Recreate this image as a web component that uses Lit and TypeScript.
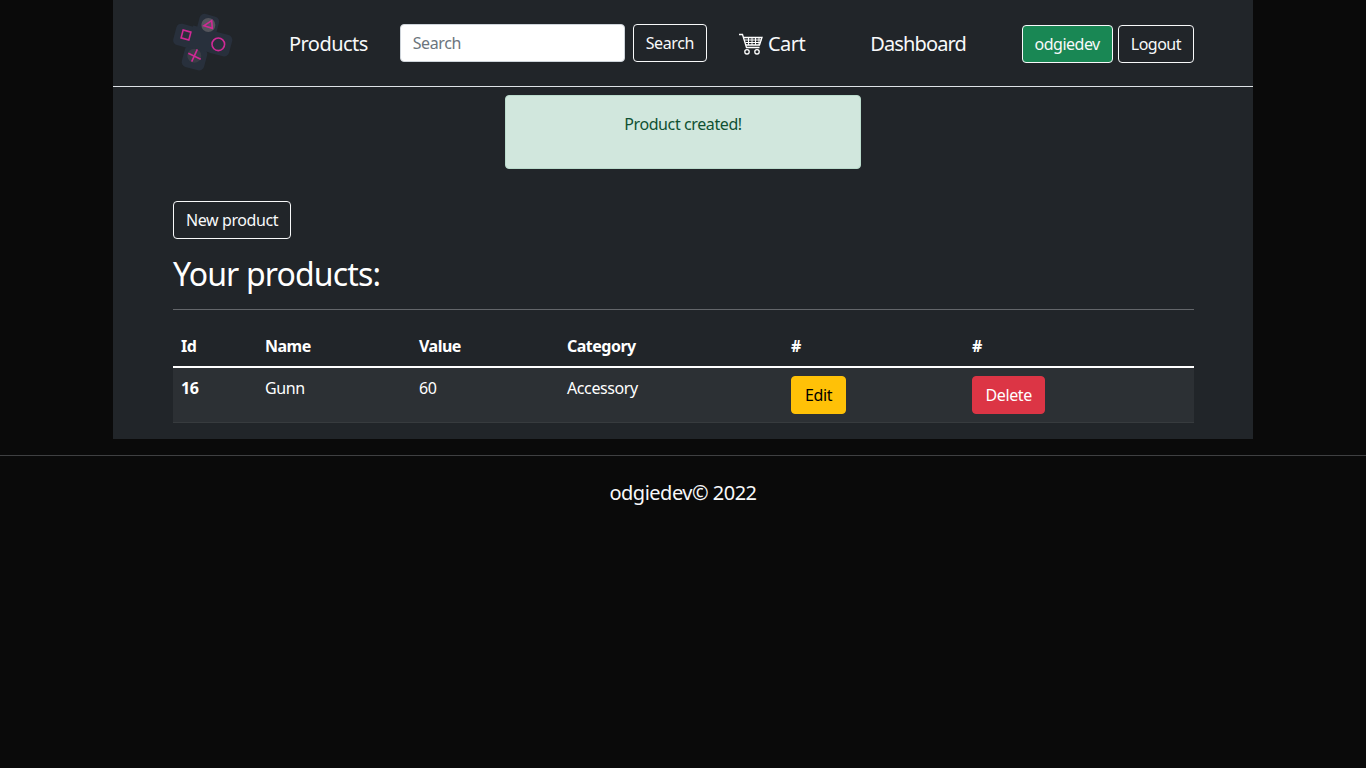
import { LitElement, html, css } from 'lit';
import { customElement } from 'lit/decorators.js';

@customElement('app-root')
export class AppRoot extends LitElement {
  static styles = css`
    :host {
      display: block;
      min-height: 768px;
      background: #0a0a0a;
      color: #fff;
      font-family: 'Noto Sans', sans-serif;
      font-size: 16px;
      line-height: 24px;
      letter-spacing: -0.4px;
    }
    .container {
      width: 1140px;
      margin: 0 auto;
      background: #212529;
      padding-bottom: 16px;
    }
    nav {
      height: 86px;
      border-bottom: 1px solid #dee2e6;
      display: flex;
      align-items: center;
      padding: 0 59px 0 60px;
    }
    .logo {
      width: 60px;
      height: 60px;
      margin-right: 56px;
      flex: none;
    }
    .nav-link {
      font-size: 20px;
      color: #f8f9fa;
      margin-top: 2px;
      letter-spacing: -0.55px;
    }
    .search {
      display: flex;
      gap: 8px;
      margin-left: 32px;
    }
    input {
      width: 225px;
      height: 38px;
      box-sizing: border-box;
      border: 1px solid #ced4da;
      border-radius: 4px;
      padding: 6px 12px;
      font: inherit;
      letter-spacing: inherit;
      background: #fff;
    }
    input::placeholder {
      color: #6c757d;
    }
    .btn {
      display: inline-block;
      box-sizing: border-box;
      height: 38px;
      padding: 6px 12px;
      border: 1px solid #f8f9fa;
      border-radius: 4px;
      background: transparent;
      color: #f8f9fa;
      font: inherit;
      letter-spacing: inherit;
    }
    .cart {
      display: flex;
      align-items: center;
      gap: 5px;
      margin-left: 32px;
    }
    .dashboard {
      margin-left: 65px;
      letter-spacing: -0.85px;
    }
    .user {
      display: flex;
      gap: 5px;
      margin-left: auto;
      margin-top: 2px;
    }
    .user .btn {
      letter-spacing: -0.5px;
    }
    .btn.green {
      background: #198754;
      border-color: #f8f9fa;
    }
    .alert {
      box-sizing: border-box;
      width: 356px;
      height: 74px;
      margin: 8px auto 32px;
      padding: 16px;
      background: #d1e7dd;
      border: 1px solid #badbcc;
      border-radius: 4px;
      color: #0f5132;
      text-align: center;
    }
    main {
      padding: 0 59px 0 60px;
    }
    h2 {
      margin: 16px 0 0;
      font-size: 32px;
      font-weight: 400;
      line-height: 38px;
      letter-spacing: -0.85px;
    }
    hr {
      border: 0;
      height: 1px;
      background: #63666a;
      margin: 16px 0;
    }
    table {
      width: 100%;
      border-collapse: collapse;
      table-layout: fixed;
    }
    th,
    td {
      padding: 8px;
      text-align: left;
      vertical-align: top;
    }
    th {
      font-weight: 700;
      letter-spacing: -0.5px;
      border-bottom: 2px solid #fff;
    }
    tbody tr {
      background: #2c3034;
      border-bottom: 1px solid #373b3e;
    }
    tbody th {
      border-bottom: 0;
    }
    .btn.edit {
      padding: 6px 13px;
      background: #ffc107;
      border-color: #ffc107;
      color: #000;
    }
    .btn.delete {
      padding: 6px 12.5px;
      background: #dc3545;
      border-color: #dc3545;
      color: #fff;
    }
    footer {
      margin-top: 16px;
      border-top: 1px solid #3f4042;
      padding-top: 25px;
      text-align: center;
      font-size: 20px;
      letter-spacing: -0.5px;
      color: #f8f9fa;
    }
  `;

  renderLogo() {
    return html`
      <svg class="logo" viewBox="0 0 60 60" fill="none">
        <g fill="#28303c">
          <rect x="25" y="2" width="20" height="20" rx="5" transform="rotate(15 35 12)" />
          <rect x="1.500" y="12" width="22" height="22" rx="5" transform="rotate(15 12.500 23)" />
          <rect x="35" y="20" width="23" height="22" rx="5" transform="rotate(15 46.500 31)" />
          <rect x="10" y="34" width="23" height="22" rx="5" transform="rotate(15 21.500 45)" />
          <rect x="17" y="15" width="23" height="22" transform="rotate(15 28.500 26)" />
        </g>
        <circle cx="35.300" cy="12" r="7" fill="#55555c" />
        <circle cx="21.300" cy="42.700" r="7" fill="#3a3d46" />
        <g stroke="#d02a96" stroke-width="1.600">
          <path d="M38.700 7.700 L39.300 15.300 L31 12.700 Z" />
          <rect x="9" y="18" width="8" height="8" transform="rotate(15 13 22)" />
          <circle cx="45.300" cy="31.300" r="6.300" />
          <path d="M15.300 40.300 L27.700 46.300 M24.300 36.300 L18.700 48.700" />
        </g>
      </svg>
    `;
  }

  render() {
    return html`
      <div class="container">
        <nav>
          ${this.renderLogo()}
          <span class="nav-link">Products</span>
          <div class="search">
            <input placeholder="Search" />
            <button class="btn">Search</button>
          </div>
          <span class="nav-link cart">
            <svg width="24" height="22" viewBox="0 0 24 22" fill="none" stroke="#fff" stroke-width="1.300">
              <path d="M0 1.500h3.500l4 13h13" />
              <path d="M4.500 4.500H23L20.500 12H7" />
              <path d="M9.500 4.500v7.500M13 4.500v7.500M16.500 4.500v7.500M20 4.500v7.500M5.500 7h17M6.300 9.500h15.500" stroke-width="1" />
              <circle cx="8" cy="18.800" r="2.200" />
              <circle cx="18" cy="18.800" r="2.200" />
            </svg>
            Cart
          </span>
          <span class="nav-link dashboard">Dashboard</span>
          <div class="user">
            <button class="btn green">odgiedev</button>
            <button class="btn">Logout</button>
          </div>
        </nav>
        <div class="alert">Product created!</div>
        <main>
          <button class="btn">New product</button>
          <h2>Your products:</h2>
          <hr />
          <table>
            <colgroup>
              <col style="width: 84px" />
              <col style="width: 154px" />
              <col style="width: 148px" />
              <col style="width: 224px" />
              <col style="width: 181px" />
              <col />
            </colgroup>
            <thead>
              <tr>
                <th>Id</th>
                <th>Name</th>
                <th>Value</th>
                <th>Category</th>
                <th>#</th>
                <th>#</th>
              </tr>
            </thead>
            <tbody>
              <tr>
                <th>16</th>
                <td>Gunn</td>
                <td>60</td>
                <td>Accessory</td>
                <td><button class="btn edit">Edit</button></td>
                <td><button class="btn delete">Delete</button></td>
              </tr>
            </tbody>
          </table>
        </main>
      </div>
      <footer>odgiedev© 2022</footer>
    `;
  }
}
